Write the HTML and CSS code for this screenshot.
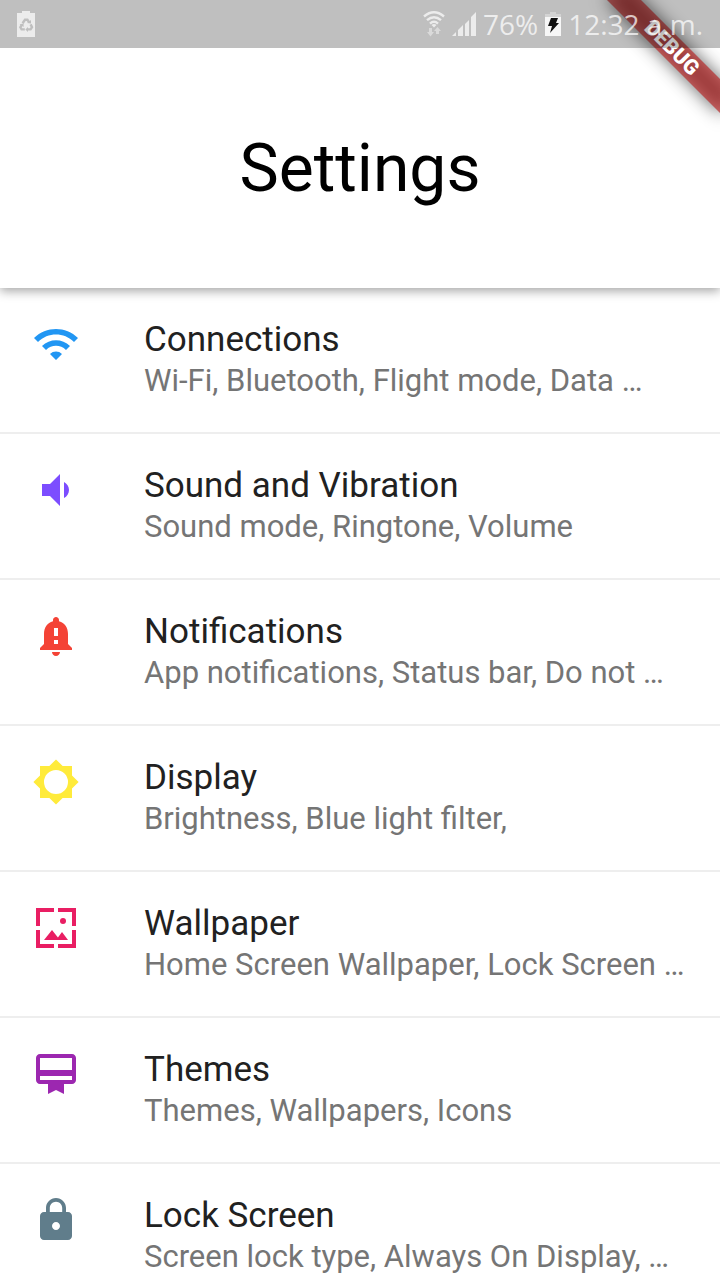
FILE: index.html
```html
<!DOCTYPE html>
<html lang="en">
<head>
<meta charset="utf-8">
<meta name="viewport" content="width=device-width, initial-scale=1">
<title>Settings</title>
<link rel="stylesheet" href="styles.css">
</head>
<body class="screen">
  <div class="status-bar">
    <svg class="status-saver" viewBox="0 0 18 26" aria-hidden="true">
      <path fill="#ececec" d="M5 0h8v2h5v24H0V2h5z"/>
      <g fill="none" stroke="#bfbfbf" stroke-width="2.4">
        <path d="M5.6 12.2L8 8.8h2.400l1.800 2.600"/>
        <path d="M13.600 13.400l1.400 2.800-1.400 2.200h-3.200"/>
        <path d="M7.800 18.400H4.600l-1.200-2.200 1.400-2.400"/>
      </g>
      <path fill="#bfbfbf" d="M10 12l4 .6V9zM11 16v5l-2.600-2.600zM2.600 13.200l4-.8v3.600z"/>
    </svg>
    <div class="status-right">
      <svg class="status-wifi" viewBox="0 0 22 26" aria-hidden="true">
        <g fill="none" stroke="#ececec" stroke-width="2.4">
          <path d="M1 5.500Q11-2.800 21 5.500"/>
          <path d="M4 9.200Q11 3.200 18 9.200"/>
          <path d="M7 12.600Q11 9 15 12.600"/>
        </g>
        <path fill="#ececec" d="M8.500 14q2.500-2 5 0L11 16.600z"/>
        <path fill="#dadada" d="M6 17h3v4h2l-3.500 4.500L4 21h2zM13 23v-3h-2l3.500-4 3.500 4h-2v3z"/>
      </svg>
      <svg class="status-signal" viewBox="0 0 24 24" aria-hidden="true">
        <path fill="#ececec" d="M0 24l4-4v4zM6 18l5-5v11H6zM13 12l4-4v16h-4zM19 5l5-5v24h-5z"/>
      </svg>
      <span class="status-text">76%</span>
      <svg class="status-battery" viewBox="0 0 16 24" aria-hidden="true">
        <path fill="#d3d3d3" d="M5 0h6v2h5v5H0V2h5z"/>
        <path fill="#f6f6f6" d="M0 5h16v19H0z"/>
        <path fill="#111" d="M6 6h7l-2 5h3L5 21l2-7H3z"/>
      </svg>
      <span class="status-text status-time">12:32 a.m.</span>
    </div>
  </div>

  <div class="banner-corner"><div class="banner"><span class="banner-label">DEBUG</span></div></div>

  <header class="app-bar"><h1 class="app-title">Settings</h1></header>

  <main class="content">
    <ul class="list">
      <li class="list-item"><a class="tile" href="#connections">
        <svg class="icon icon-blue" viewBox="0 0 24 24" aria-hidden="true"><path d="M1 9l2 2c4.970-4.970 13.030-4.970 18 0l2-2C16.930 2.930 7.080 2.930 1 9zm8 8l3 3 3-3c-1.650-1.660-4.340-1.660-6 0zm-4-4l2 2c2.760-2.760 7.240-2.760 10 0l2-2C15.140 9.140 8.870 9.140 5 13z"/></svg>
        <span class="tile-text"><span class="tile-title">Connections</span><span class="tile-subtitle">Wi-Fi, Bluetooth, Flight mode, Data …</span></span>
      </a></li>
      <li class="list-item"><a class="tile" href="#sound">
        <svg class="icon icon-violet" viewBox="0 0 24 24" aria-hidden="true"><path d="M18.500 12c0-1.770-1.020-3.290-2.500-4.030v8.050c1.480-.73 2.500-2.250 2.500-4.020zM5 9v6h4l5 5V4L9 9H5z"/></svg>
        <span class="tile-text"><span class="tile-title">Sound and Vibration</span><span class="tile-subtitle">Sound mode, Ringtone, Volume</span></span>
      </a></li>
      <li class="list-item"><a class="tile" href="#notifications">
        <svg class="icon icon-red" viewBox="0 0 24 24" aria-hidden="true"><path d="M18 16v-5c0-3.070-1.640-5.640-4.500-6.320V4c0-.83-.67-1.500-1.500-1.500s-1.500.67-1.500 1.500v.68C7.630 5.360 6 7.920 6 11v5l-2 2v1h16v-1l-2-2zm-5 0h-2v-2h2v2zm0-4h-2V8h2v4zm-1 10c1.100 0 2-.9 2-2h-4c0 1.100.89 2 2 2z"/></svg>
        <span class="tile-text"><span class="tile-title">Notifications</span><span class="tile-subtitle">App notifications, Status bar, Do not …</span></span>
      </a></li>
      <li class="list-item"><a class="tile" href="#display">
        <svg class="icon icon-yellow" viewBox="0 0 24 24" aria-hidden="true"><path fill-rule="evenodd" d="M20 15.310L23.310 12 20 8.690V4h-4.690L12 .69 8.690 4H4v4.690L.69 12 4 15.310V20h4.690L12 23.310 15.310 20H20zM12 18a6 6 0 1 1 0-12 6 6 0 0 1 0 12z"/></svg>
        <span class="tile-text"><span class="tile-title">Display</span><span class="tile-subtitle">Brightness, Blue light filter,</span></span>
      </a></li>
      <li class="list-item"><a class="tile" href="#wallpaper">
        <svg class="icon icon-pink" viewBox="0 0 24 24" aria-hidden="true"><path d="M2 2h9v2H4v7H2zM13 2h9v9h-2V4h-7zM2 13h2v7h7v2H2zM20 13h2v9h-9v-2h7zM10 13l-4 5h12l-3-4-2.030 2.710z"/><circle cx="15.500" cy="8.500" r="1.500"/></svg>
        <span class="tile-text"><span class="tile-title">Wallpaper</span><span class="tile-subtitle">Home Screen Wallpaper, Lock Screen …</span></span>
      </a></li>
      <li class="list-item"><a class="tile" href="#themes">
        <svg class="icon icon-purple" viewBox="0 0 24 24" aria-hidden="true"><path d="M20 2H4c-1.110 0-2 .89-2 2v11c0 1.110.89 2 2 2h4v5l4-2 4 2v-5h4c1.110 0 2-.89 2-2V4c0-1.110-.89-2-2-2zm0 13H4v-2h16v2zm0-5H4V4h16v6z"/></svg>
        <span class="tile-text"><span class="tile-title">Themes</span><span class="tile-subtitle">Themes, Wallpapers, Icons</span></span>
      </a></li>
      <li class="list-item"><a class="tile" href="#lock-screen">
        <svg class="icon icon-slate" viewBox="0 0 24 24" aria-hidden="true"><path d="M18 8h-1V6c0-2.760-2.240-5-5-5S7 3.240 7 6v2H6c-1.100 0-2 .9-2 2v10c0 1.100.9 2 2 2h12c1.100 0 2-.9 2-2V10c0-1.100-.9-2-2-2zm-6 9c-1.100 0-2-.9-2-2s.9-2 2-2 2 .9 2 2-.9 2-2 2zm3.100-9H8.900V6c0-1.710 1.390-3.100 3.100-3.100 1.710 0 3.100 1.390 3.100 3.100v2z"/></svg>
        <span class="tile-text"><span class="tile-title">Lock Screen</span><span class="tile-subtitle">Screen lock type, Always On Display, …</span></span>
      </a></li>
    </ul>
  </main>
</body>
</html>
```
FILE: styles.css
```css
* {
  box-sizing: border-box;
}

.screen {
  display: flex;
  flex-direction: column;
  height: 100vh;
  margin: 0;
  overflow: hidden;
  position: relative;
  background: #fff;
  font-family: Roboto, "Noto Sans", sans-serif;
}

.status-bar {
  display: flex;
  flex-shrink: 0;
  align-items: center;
  justify-content: space-between;
  height: 48px;
  padding: 0 17px;
  position: relative;
  z-index: 3;
  background: rgba(0, 0, 0, 0.25);
}

.status-right {
  display: flex;
  align-items: center;
  gap: 7px;
}

.status-saver {
  width: 18px;
  height: 26px;
}

.status-wifi {
  width: 22px;
  height: 26px;
}

.status-signal {
  width: 24px;
  height: 24px;
}

.status-battery {
  width: 16px;
  height: 24px;
}

.status-text {
  color: rgba(255, 255, 255, 0.72);
  font-family: "Open Sans", sans-serif;
  font-size: 28px;
  line-height: 48px;
  white-space: nowrap;
}

/* Corner ribbon, clipped to the top right of the screen */
.banner-corner {
  position: absolute;
  top: 0;
  right: 0;
  z-index: 2;
  width: 160px;
  height: 160px;
  overflow: hidden;
  pointer-events: none;
}

.banner {
  position: absolute;
  top: 36px;
  right: -32px;
  width: 160px;
  height: 24px;
  transform: rotate(45deg);
  text-align: center;
}

.banner::before,
.banner::after {
  content: "";
  position: absolute;
  inset: 0;
}

.banner::before {
  background: rgba(0, 0, 0, 0.6);
  filter: blur(9px);
}

.banner::after {
  background: rgba(183, 28, 28, 0.63);
}

.banner-label {
  position: relative;
  z-index: 1;
  color: #fff;
  font-size: 21px;
  font-weight: 900;
  line-height: 24px;
}

.app-bar {
  display: flex;
  flex-shrink: 0;
  align-items: center;
  justify-content: center;
  height: 240px;
  padding-top: 2px;
  position: relative;
  z-index: 1;
  background: #fff;
  box-shadow: 0 3px 10px rgba(0, 0, 0, 0.36);
  clip-path: inset(0 0 -20px);
}

.app-title {
  margin: 0;
  color: #000;
  font-size: 66px;
  font-weight: 400;
  line-height: 78px;
}

.content {
  flex: 1;
  min-height: 0;
  overflow-y: auto;
  scrollbar-width: none;
}

.list {
  margin: 0;
  padding: 0;
  list-style: none;
}

.list-item {
  border-bottom: 2px solid #eee;
}

.tile {
  display: flex;
  align-items: flex-start;
  gap: 64px;
  padding: 31px 32px;
  text-decoration: none;
}

.tile-text {
  display: flex;
  flex: 1;
  flex-direction: column;
  min-width: 0;
}

.tile-title,
.tile-subtitle {
  overflow: hidden;
  text-overflow: ellipsis;
  white-space: nowrap;
}

.tile-title {
  color: #212121;
  font-size: 35px;
  line-height: 42px;
}

.tile-subtitle {
  color: #757575;
  font-size: 31px;
  line-height: 40px;
}

.icon {
  flex-shrink: 0;
  width: 48px;
  height: 48px;
  margin-top: 1px;
  fill: currentColor;
}

.icon-blue { color: #2196f3; }
.icon-violet { color: #7c4dff; }
.icon-red { color: #f44336; }
.icon-yellow { color: #ffeb3b; }
.icon-pink { color: #e91e63; }
.icon-purple { color: #9c27b0; }
.icon-slate { color: #607d8b; }
```
